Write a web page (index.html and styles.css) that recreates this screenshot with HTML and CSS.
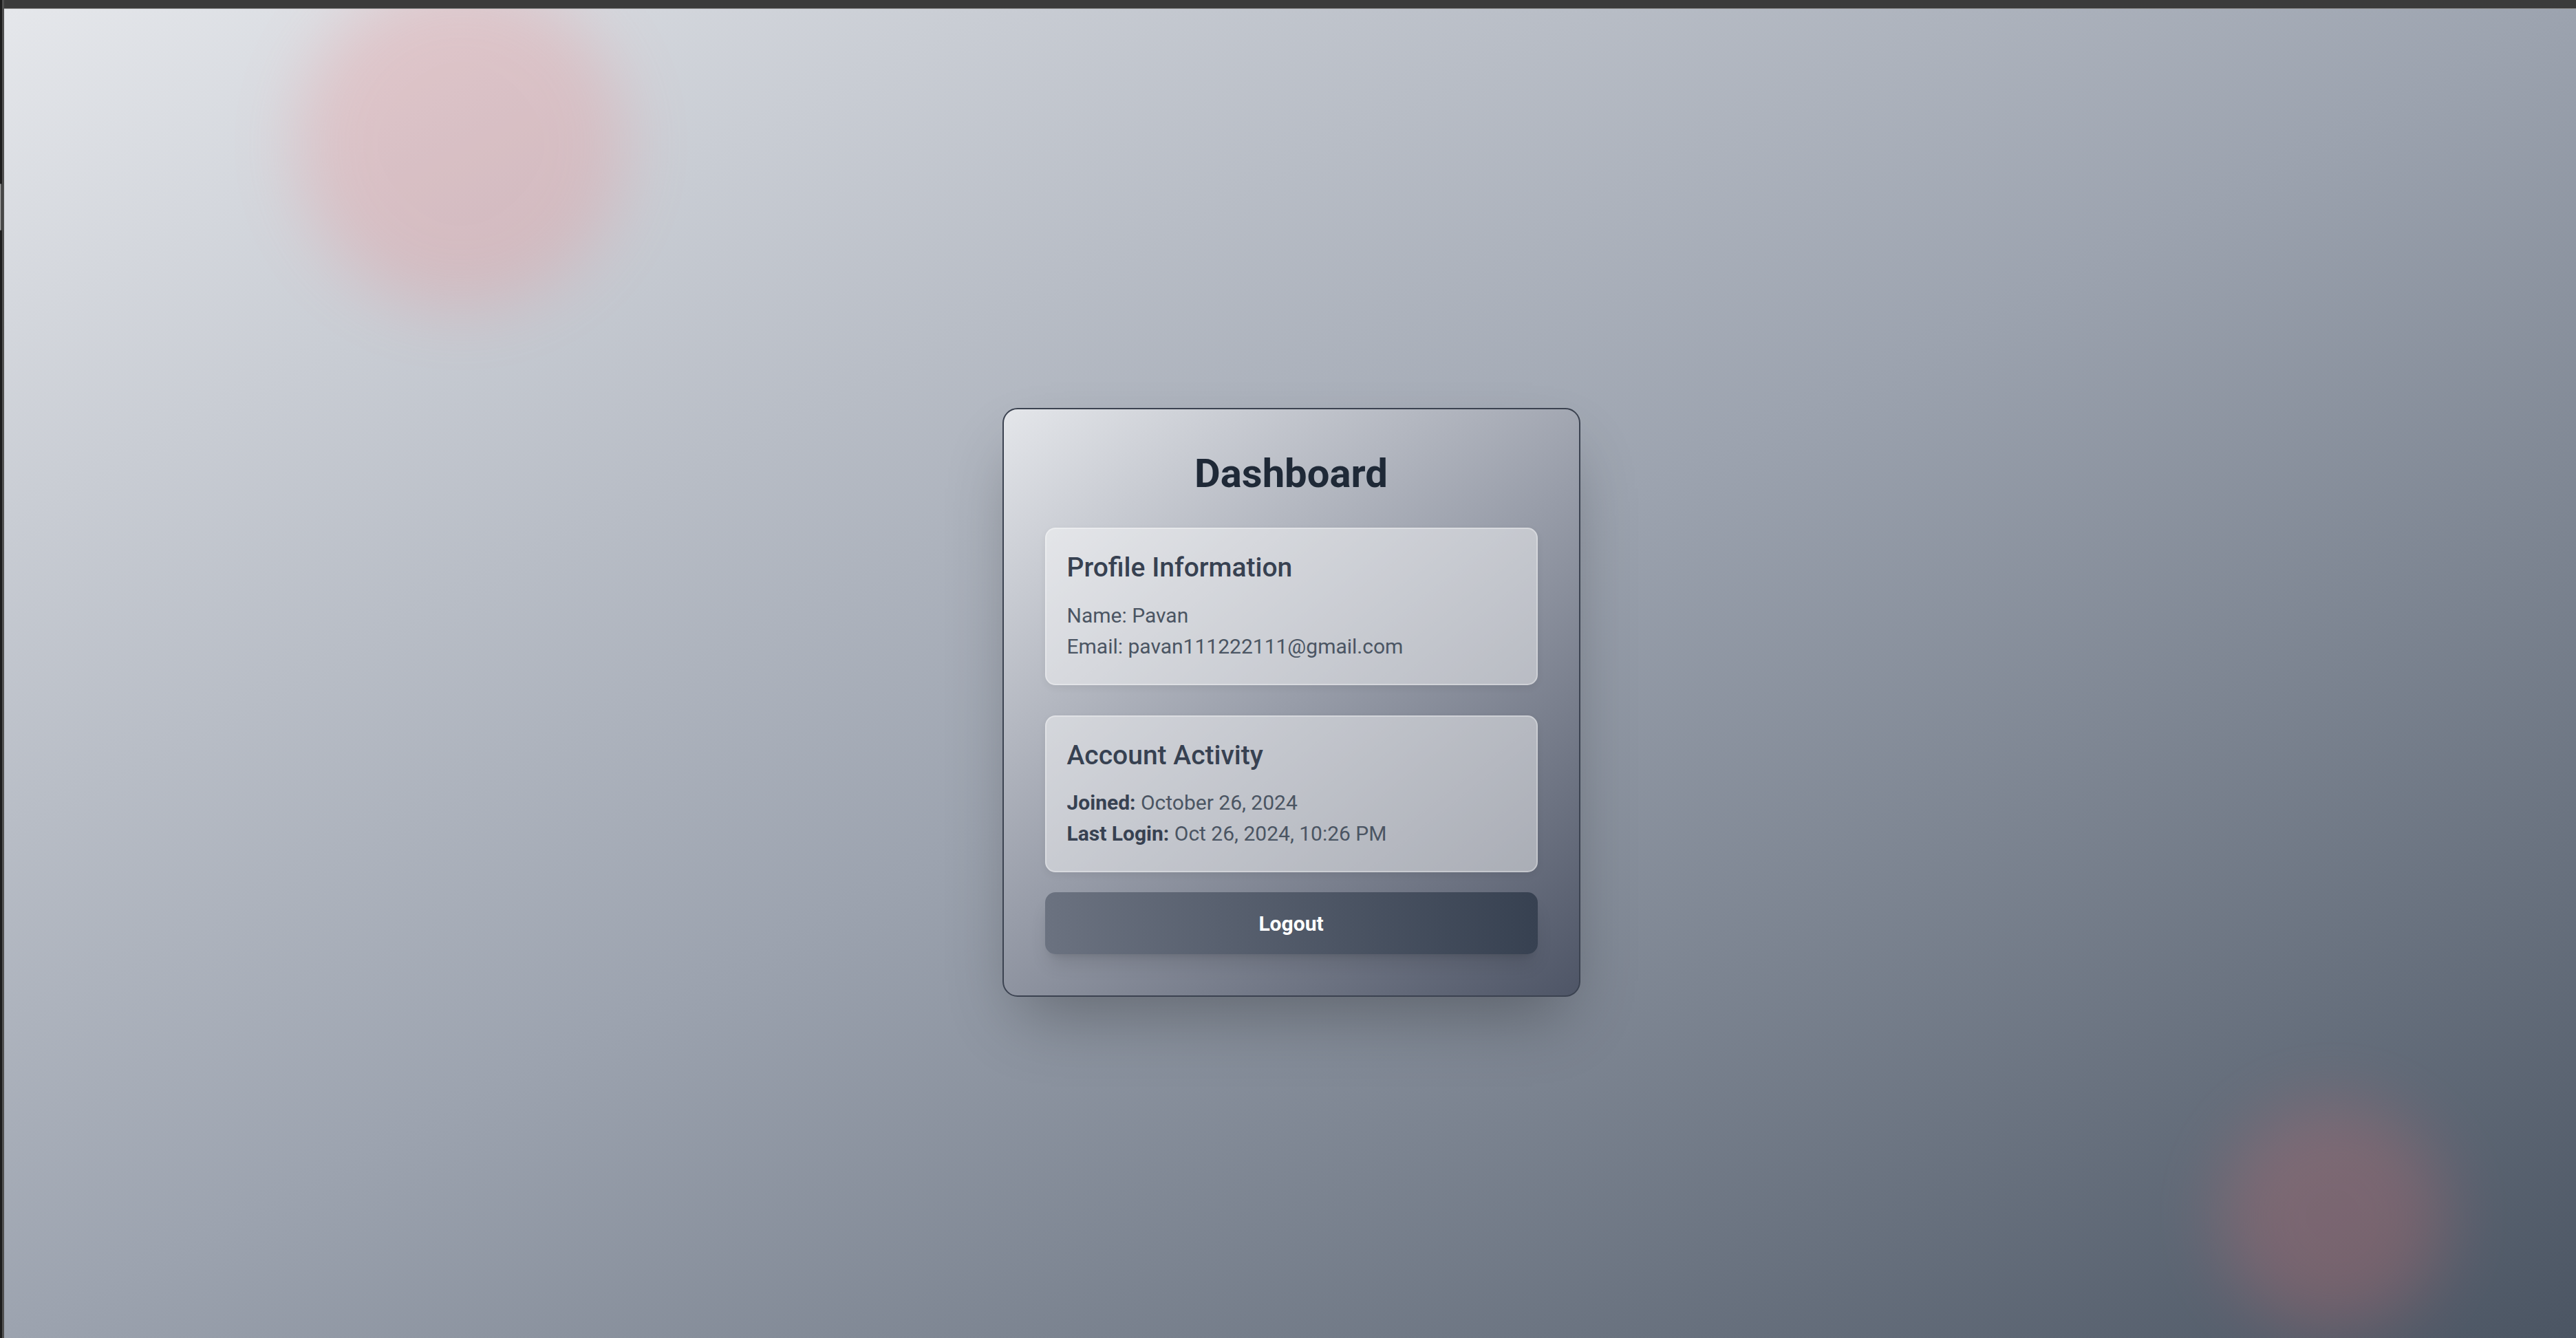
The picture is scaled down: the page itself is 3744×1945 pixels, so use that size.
FILE: index.html
```html
<!DOCTYPE html>
<html lang="en">
<head>
<meta charset="utf-8">
<title>Dashboard</title>
<link rel="stylesheet" href="styles.css">
</head>
<body>
<div class="shell">
  <aside class="edge">
    <div class="edge-dark"><div class="edge-thumb"></div></div>
    <div class="edge-light"></div>
  </aside>
  <div class="window">
    <div class="topbar"></div>
    <main class="page">
      <div class="blob blob-a"></div>
      <div class="blob blob-b"></div>
      <section class="card">
        <h1 class="title">Dashboard</h1>
        <div class="panel">
          <h2 class="panel-title">Profile Information</h2>
          <p class="line">Name: Pavan</p>
          <p class="line">Email: pavan111222111@gmail.com</p>
        </div>
        <div class="panel">
          <h2 class="panel-title">Account Activity</h2>
          <p class="line"><strong class="label">Joined:</strong> October 26, 2024</p>
          <p class="line"><strong class="label">Last Login:</strong> Oct 26, 2024, 10:26 PM</p>
        </div>
        <button class="logout" type="button">Logout</button>
      </section>
    </main>
  </div>
</div>
</body>
</html>
```

FILE: styles.css
```css
* { box-sizing: border-box; }

html, body {
  margin: 0;
  padding: 0;
  height: 100%;
}

body {
  font-family: Roboto, "Noto Sans", "Liberation Sans", sans-serif;
  background: #1e1e1e;
  overflow: hidden;
}

.shell {
  display: flex;
  height: 1945px;
}

.edge {
  display: flex;
  width: 6px;
  flex: none;
}

.edge-dark {
  width: 3px;
  background: #1d1d1d;
  padding-top: 267px;
}

.edge-thumb {
  width: 2px;
  height: 68px;
  background: #8a8a8a;
  border-radius: 1px;
}

.edge-light {
  width: 3px;
  background: #4f4f4f;
}

.window {
  flex: 1;
  display: flex;
  flex-direction: column;
  min-width: 0;
}

.topbar {
  height: 13px;
  flex: none;
  background: #3b3b3b;
  border-bottom: 1px solid #8c8c8c;
}

.page {
  position: relative;
  flex: 1;
  overflow: hidden;
  display: flex;
  align-items: center;
  justify-content: center;
  padding-top: 84px;
  padding-left: 3px;
  background: linear-gradient(to bottom right, #e5e7eb 0%, #9ca3af 50%, #4b5563 100%);
}

.blob {
  position: absolute;
  border-radius: 50%;
  background: #f87171;
  opacity: 0.2;
  filter: blur(48px);
}

.blob-a {
  width: 480px;
  height: 480px;
  left: 424px;
  top: -44px;
}

.blob-b {
  width: 330px;
  height: 330px;
  left: 3220px;
  top: 1589px;
}

.card {
  position: relative;
  width: 840px;
  padding: 60px;
  border: 2px solid #3b4250;
  border-radius: 22px;
  background: linear-gradient(142deg, #e4e6ea 0%, #989da9 50%, #4e5566 100%);
  box-shadow: 0 47px 94px -23px rgba(0, 0, 0, 0.3);
}

.title {
  margin: 0 0 45px;
  font-size: 58px;
  line-height: 67.5px;
  font-weight: 700;
  color: #1f2937;
  text-align: center;
}

.panel {
  margin-bottom: 44px;
  padding: 30px 30px 32px;
  border: 2px solid rgba(255, 255, 255, 0.3);
  border-radius: 15px;
  background: rgba(255, 255, 255, 0.45);
  box-shadow: 0 4px 12px rgba(0, 0, 0, 0.06);
}

.panel + .panel {
  margin-bottom: 29px;
}

.panel-title {
  margin: 0 0 20px;
  font-size: 39px;
  line-height: 52.5px;
  font-weight: 500;
  color: #374151;
}

.line {
  margin: 0;
  font-size: 30px;
  line-height: 45px;
  color: #4b5563;
}

.label {
  font-weight: 700;
  color: #374151;
}

.logout {
  display: block;
  width: 100%;
  padding: 22.5px 0;
  border: none;
  border-radius: 15px;
  background: linear-gradient(to right, #6b7280, #374151);
  color: #ffffff;
  font-family: inherit;
  font-size: 30px;
  line-height: 45px;
  font-weight: 700;
  box-shadow: 0 19px 28px -6px rgba(0, 0, 0, 0.12), 0 8px 11px -8px rgba(0, 0, 0, 0.12);
}
```
